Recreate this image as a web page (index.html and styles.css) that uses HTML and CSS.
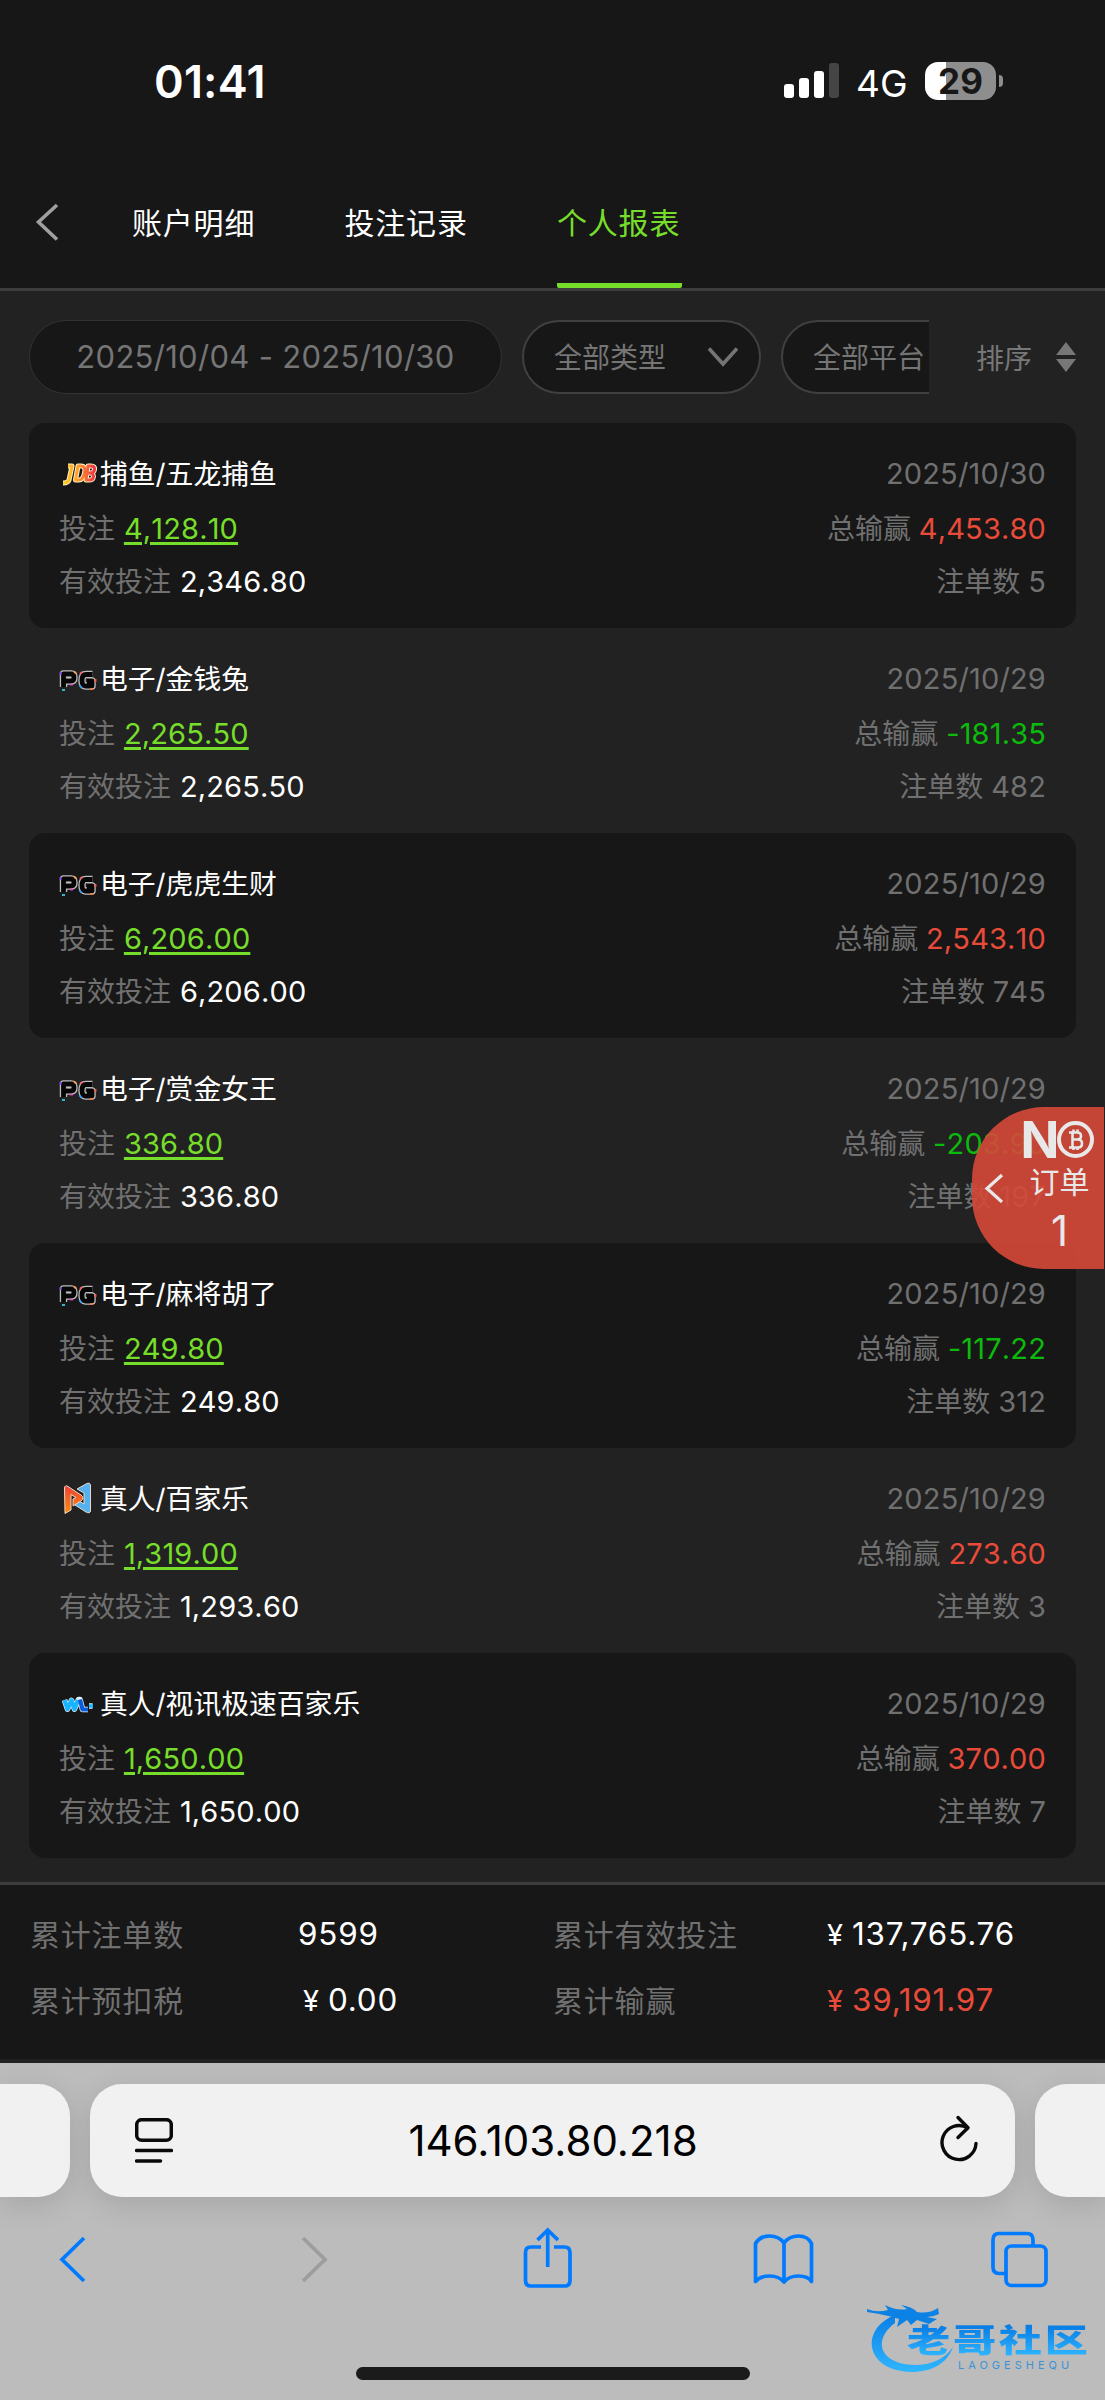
FILE: index.html
```html
<!DOCTYPE html>
<html lang="zh-CN">
<head>
<meta charset="utf-8">
<title>个人报表</title>
<link rel="stylesheet" href="styles.css">
</head>
<body>
<svg width="0" height="0" class="defs" aria-hidden="true">
  <defs>
    <linearGradient id="gold" gradientUnits="userSpaceOnUse" x1="3" x2="36" y1="0" y2="0"><stop offset="0" stop-color="#ffd61f"/><stop offset=".5" stop-color="#ff9a2b"/><stop offset="1" stop-color="#f2304a"/></linearGradient>
    <linearGradient id="fire" x1="0" y1="0" x2="0" y2="1"><stop offset="0" stop-color="#ee4136"/><stop offset="1" stop-color="#ff8a0c"/></linearGradient>
    <linearGradient id="sea" x1="0" y1="0" x2="0" y2="1"><stop offset="0" stop-color="#0a7fe6"/><stop offset="1" stop-color="#2fb6ff"/></linearGradient>
    <symbol id="pg" viewBox="0 0 38 22">
      <g fill="none" stroke-linejoin="round">
        <path d="M4.500 18V5H12Q15 5 15 8.500T12 12H5M33.500 5.500H27Q23 5.500 23 11.500T27 17H33V12H28" stroke="#bdbdbd" stroke-width="7.400"/>
        <path d="M4.500 18V5H12Q15 5 15 8.500T12 12H5M33.500 5.500H27Q23 5.500 23 11.500T27 17H33V12H28" stroke="#060606" stroke-width="4.800"/>
        <path d="M8 8.500H11.500" stroke="#bdbdbd" stroke-width="1.400"/>
      </g>
      <path d="M1.500 3v3" stroke="#8a4dff" stroke-width="1.800"/><path d="M3 21h3" stroke="#35c8e8" stroke-width="1.800"/><path d="M11 15.500h3" stroke="#f14bd0" stroke-width="1.800"/><path d="M15 2.500l2 2" stroke="#ff9a4a" stroke-width="1.800"/><path d="M20.500 16l2 3" stroke="#3a9cff" stroke-width="1.800"/><path d="M36.500 10v3" stroke="#ff5a4a" stroke-width="1.800"/><path d="M31 20h3" stroke="#ff7a3a" stroke-width="1.800"/><path d="M21 5l2-2" stroke="#ff5a6a" stroke-width="1.800"/>
    </symbol>
  </defs>
</svg>

<div class="status">
  <span class="clock">01:41</span>
  <div class="status-right">
    <svg class="signal" width="56" height="36" viewBox="0 0 56 36"><rect x="0" y="21" width="10" height="14" rx="3" fill="#fff"/><rect x="15" y="15" width="10" height="20" rx="3" fill="#fff"/><rect x="30" y="8" width="10" height="27" rx="3" fill="#fff"/><rect x="45" y="0" width="10" height="35" rx="3" fill="#454545"/></svg>
    <span class="net">4G</span>
    <div class="battery"><span>29</span></div>
    <i class="battery-cap"></i>
  </div>
</div>

<nav class="tabs">
  <svg class="back" width="26" height="40" viewBox="0 0 26 40"><path d="M24 3L5.500 20L24 37.500" fill="none" stroke="#a0a0a0" stroke-width="3.600"/></svg>
  <a>账户明细</a><a>投注记录</a><a class="on">个人报表</a>
</nav>

<section class="filters">
  <div class="pills">
    <div class="pill date">2025/10/04 - 2025/10/30</div>
    <div class="pill type"><span>全部类型</span><svg width="32" height="22" viewBox="0 0 32 22"><path d="M2 2.500L16 18L30 2.500" fill="none" stroke="#757575" stroke-width="3.600"/></svg></div>
    <div class="pill plat"><span>全部平台</span></div>
  </div>
  <div class="sort"><span>排序</span><svg width="20" height="30" viewBox="0 0 20 30"><path d="M0 13L10 0L20 13ZM0 17H20L10 30Z" fill="#777"/></svg></div>
</section>

<main class="list">
  <article class="card">
    <h3><svg class="logo" width="38" height="38" viewBox="0 0 38 38"><g fill="none" stroke-linejoin="round"><path d="M9 13H13L10 27Q9 30 4 30M19 13L16.500 27H20Q24 27 25.500 20T22 13ZM29 13L27 27H31Q34 27 34.500 23.500Q34 20 31 20Q35 20 35.500 16.500T32 13Z" stroke="#fff1c4" stroke-width="5"/><path d="M9 13H13L10 27Q9 30 4 30M19 13L16.500 27H20Q24 27 25.500 20T22 13ZM29 13L27 27H31Q34 27 34.500 23.500Q34 20 31 20H28.500H31Q35 20 35.500 16.500T32 13Z" stroke="url(#gold)" stroke-width="3"/></g></svg>捕鱼/五龙捕鱼</h3><time>2025/10/30</time>
    <p>投注 <b class="link">4,128.10</b></p><p class="r">总输赢 <b class="up">4,453.80</b></p>
    <p>有效投注 <b>2,346.80</b></p><p class="r">注单数 <b class="num">5</b></p>
  </article>
  <article class="card">
    <h3><svg class="logo pg" width="38" height="22"><use href="#pg"/></svg>电子/金钱兔</h3><time>2025/10/29</time>
    <p>投注 <b class="link">2,265.50</b></p><p class="r">总输赢 <b class="down">-181.35</b></p>
    <p>有效投注 <b>2,265.50</b></p><p class="r">注单数 <b class="num">482</b></p>
  </article>
  <article class="card">
    <h3><svg class="logo pg" width="38" height="22"><use href="#pg"/></svg>电子/虎虎生财</h3><time>2025/10/29</time>
    <p>投注 <b class="link">6,206.00</b></p><p class="r">总输赢 <b class="up">2,543.10</b></p>
    <p>有效投注 <b>6,206.00</b></p><p class="r">注单数 <b class="num">745</b></p>
  </article>
  <article class="card">
    <h3><svg class="logo pg" width="38" height="22"><use href="#pg"/></svg>电子/赏金女王</h3><time>2025/10/29</time>
    <p>投注 <b class="link">336.80</b></p><p class="r">总输赢 <b class="down">-203.90</b></p>
    <p>有效投注 <b>336.80</b></p><p class="r">注单数 <b class="num">197</b></p>
  </article>
  <article class="card">
    <h3><svg class="logo pg" width="38" height="22"><use href="#pg"/></svg>电子/麻将胡了</h3><time>2025/10/29</time>
    <p>投注 <b class="link">249.80</b></p><p class="r">总输赢 <b class="down">-117.22</b></p>
    <p>有效投注 <b>249.80</b></p><p class="r">注单数 <b class="num">312</b></p>
  </article>
  <article class="card">
    <h3><svg class="logo" width="38" height="38" viewBox="0 0 38 38"><g stroke="#e9d9c8" stroke-width="1" stroke-linejoin="round"><path d="M27 6Q31.500 3.500 31.500 8V33Q31 36 27 34L16 27L20 23L25 26V15L18 11Z" fill="#56b2ee"/><path d="M5.500 10Q6 6.500 9 8.500L22 17Q26 20 22 23L14 28V21L17 19.500L12 16.500V32L6 35.500Z" fill="url(#fire)"/></g></svg>真人/百家乐</h3><time>2025/10/29</time>
    <p>投注 <b class="link">1,319.00</b></p><p class="r">总输赢 <b class="up">273.60</b></p>
    <p>有效投注 <b>1,293.60</b></p><p class="r">注单数 <b class="num">3</b></p>
  </article>
  <article class="card">
    <h3><svg class="logo" width="38" height="38" viewBox="0 0 38 38"><g fill="none" stroke-linejoin="round"><path d="M5.500 17L8.500 26L12.500 17.500L15.500 26L19.500 16.500H21L23.500 26.500H29M30 23H33.500" stroke="#e4f4ff" stroke-width="5.600"/><path d="M5.500 17L8.500 26L12.500 17.500L15.500 26L19 17" stroke="#18b4ff" stroke-width="4.300"/><path d="M21 16.500L23.500 26.500H29" stroke="#0a5bd8" stroke-width="4.200"/><path d="M30 23H34" stroke="#18b4ff" stroke-width="3.500"/></g></svg>真人/视讯极速百家乐</h3><time>2025/10/29</time>
    <p>投注 <b class="link">1,650.00</b></p><p class="r">总输赢 <b class="up">370.00</b></p>
    <p>有效投注 <b>1,650.00</b></p><p class="r">注单数 <b class="num">7</b></p>
  </article>
</main>

<section class="totals">
  <span>累计注单数</span><b>9599</b><span>累计有效投注</span><b><i>¥</i>137,765.76</b>
  <span>累计预扣税</span><b class="pad"><i>¥</i>0.00</b><span>累计输赢</span><b class="up"><i>¥</i>39,191.97</b>
</section>

<footer class="browser">
  <div class="urls">
    <div class="tab side left"></div>
    <div class="tab main">
      <svg width="38" height="46" viewBox="0 0 38 46"><g fill="none" stroke="#0a0a0a" stroke-width="3.500"><rect x="1.700" y="1.700" width="34.600" height="20.600" rx="5"/><path d="M1.500 32.500H36.500M1.500 43H25.500" stroke-linecap="round"/></g></svg>
      <span>146.103.80.218</span>
      <svg class="reload" width="38" height="48" viewBox="0 0 38 48"><g fill="none" stroke="#0a0a0a" stroke-width="3.400" stroke-linecap="round" stroke-linejoin="round"><path d="M36 28.500A17 17 0 1 1 27.500 12.800"/><path d="M18 2.500L28 12.800L18 22.500"/></g></svg>
    </div>
    <div class="tab side right"></div>
  </div>
  <div class="tools">
    <svg width="1105" height="80" viewBox="0 2220 1105 80" fill="none" stroke="#007aff" stroke-width="3.700">
      <path d="M84 2238L62 2259.500L84 2281"/>
      <path d="M303 2238L325 2259.500L303 2281" stroke="#9d9d9d"/>
      <path d="M541 2247H531Q525.500 2247 525.500 2252.500V2280.500Q525.500 2286 531 2286H564.500Q570 2286 570 2280.500V2252.500Q570 2247 564.500 2247H554M547.700 2267V2231M537.500 2240L547.700 2230L558 2240"/>
      <path stroke-linejoin="round" d="M784 2243Q779 2236 769.500 2236T755.500 2243.500V2281.500Q760 2276 769.500 2276T784 2282Q789 2276 798.500 2276T811.500 2281.500V2243.500Q808 2236 798.500 2236T784 2243V2282"/>
      <path d="M1005 2273.500H999Q993 2273.500 993 2267V2240Q993 2233.500 999 2233.500H1027Q1033 2233.500 1033 2240V2245"/><rect x="1006" y="2246" width="40" height="39.500" rx="5.500"/>
    </svg>
  </div>
  <div class="home"></div>
</footer>

<aside class="float">
  <svg width="20" height="30" viewBox="0 0 20 30"><path d="M18 2L3 15.500L18 29" fill="none" stroke="#e8e8e8" stroke-width="3.200"/></svg>
  <div class="float-body">
    <div class="no"><b>N</b><svg width="37" height="37" viewBox="0 0 37 37"><g fill="none" stroke="#e8e8e8"><circle cx="18.500" cy="18.500" r="16.500" stroke-width="4"/><path d="M12 11.500H20Q24 11.500 24 15T20 18.500H15H21Q25 18.500 25 22.500T21 26.500H12M15.500 11.500V26.500M16.500 8.500V11M20.500 8.500V11M16.500 26.500V29M20.500 26.500V29" stroke-width="2.600"/></g></svg></div>
    <span class="t">订单</span><span class="n">1</span>
  </div>
</aside>

<div class="mark">
  <svg width="92" height="72" viewBox="0 0 92 72"><path d="M28 10C-8 24 -2 66 44 67C66 67 80 58 86 42C78 54 64 60 48 60C14 60 4 36 28 18Z" fill="url(#sea)"/><path d="M0 4Q10 8 21 5L18 0Q30 6 40 4L34 0Q46 2 50 7Q62 9 71 3L72 9Q66 12 60 12L70 14L62 19L50 15L44 20L40 15L30 22L32 14Q20 10 0 7Z" fill="#0b82e4"/></svg>
  <div><b>老哥社区</b><small>LAOGESHEQU</small></div>
</div>
</body>
</html>
```
FILE: styles.css
```css
* { box-sizing: border-box; margin: 0; padding: 0; }
body {
  position: relative; width: 1105px; height: 2400px; overflow: hidden;
  display: flex; flex-direction: column;
  background: #222; color: #fff;
  font-family: Inter, "Noto Sans CJK SC", sans-serif; font-size: 28px;
}
b, h3, i { font-weight: 400; font-style: normal; }
svg { display: block; flex: none; }
.defs { position: absolute; }

.status {
  height: 164px; flex: none; background: #171717;
  display: flex; justify-content: space-between; padding: 0 102px 0 154px;
}
.clock { font-size: 45px; font-weight: 600; line-height: 164px; letter-spacing: .2px; }
.status-right { display: flex; align-items: center; height: 162px; }
.net { font-size: 37px; font-weight: 400; margin: 4px 18px 0 16px; width: 51px; }
.battery {
  width: 71px; height: 38px; border-radius: 13px; color: #171717;
  background: linear-gradient(90deg, #fff 21px, #8e8e8e 21px);
  font-size: 35px; font-weight: 700; text-align: center; line-height: 38px;
}
.battery-cap { width: 4px; height: 12px; margin-left: 3px; background: #8e8e8e; border-radius: 0 4px 4px 0; }

.tabs {
  height: 127px; flex: none; background: #171717; border-bottom: 3px solid #3c3c3c;
  display: flex; padding-left: 33px; font-size: 30px; letter-spacing: .8px;
}
.back { margin: 38px 73px 0 0; }
.tabs a { width: 125px; margin-right: 87.5px; height: 124px; line-height: 118px; white-space: nowrap; }
.tabs .on { color: #77dd2b; border-bottom: 5px solid #77dd2b; border-radius: 2px; }

.filters { height: 132px; flex: none; display: flex; padding: 29px 29px 0; }
.pills { width: 900px; height: 74px; display: flex; gap: 20px; overflow: hidden; }
.pill {
  flex: none; height: 74px; border: 2px solid #404040; border-radius: 37px; background: #171717;
  color: #757575; line-height: 72px; display: flex; align-items: center; justify-content: space-between;
  white-space: nowrap;
}
.date { width: 473px; border: 1px solid #333; justify-content: center; font-size: 31px; letter-spacing: .3px; }
.type { width: 239px; padding: 0 20px 0 30px; }
.plat { width: 239px; padding-left: 30px; }
.type span, .plat span { padding-top: 2px; }
.sort { display: flex; height: 74px; align-items: center; color: #777; justify-content: space-between; width: 100px; margin-left: auto; }

.list { height: 1459px; flex: none; padding: 0 29px; }
.card {
  height: 205px; padding: 23px 30px; border-radius: 16px; color: #707070;
  display: grid; grid-template-columns: 1fr auto; grid-template-rows: 54px 54px 52px;
  align-items: center; white-space: nowrap;
}
.card:nth-child(odd) { background: #171717; }
.card h3 { display: flex; align-items: center; gap: 3px; font-size: 27.8px; color: #fff; padding-bottom: 3px; }
.card time { font-size: 29px; padding-top: 1px; letter-spacing: .15px; }
.card b { color: #fff; font-size: 29px; font-kerning: none; letter-spacing: .15px; margin-left: 1px; }
.card .r b { margin-left: 0; }
.card .num { color: inherit; }
.card .link { color: #77dd2b; text-decoration: underline; text-decoration-thickness: 3px; text-underline-offset: 3px; }
.card .up, .totals .up { color: #e94b3a; }
.card .down { color: #0cba0c; }
.card .r, .card time { text-align: right; }
.pg { margin-top: 7px; }

.totals {
  height: 181px; flex: none; background: #171717; border-top: 3px solid #3c3c3c; border-bottom: 4px solid #222;
  padding: 16px 30px 0; display: grid; grid-template-columns: 268px 255px 274px 1fr; grid-template-rows: 66px 66px;
  align-items: center; font-size: 30px; letter-spacing: .8px; color: #707070; white-space: nowrap;
}
.totals span { padding-bottom: 2px; }
.totals b { color: #fff; font-size: 31.4px; }
.totals i { display: inline-block; width: 25px; font-size: 29px; }
.totals .pad { padding-left: 5px; }

.browser { flex: 1; background: #bcbcbc; display: flex; flex-direction: column; padding-top: 21px; }
.urls { display: flex; gap: 20px; }
.tab { height: 113px; background: #f1f1f1; border-radius: 32px; box-shadow: 0 8px 30px rgba(0,0,0,.12); flex: none; }
.left { width: 70px; border-radius: 0 32px 32px 0; }
.right { width: 70px; border-radius: 32px 0 0 32px; }
.tab.main { width: 925px; display: flex; align-items: center; justify-content: space-between; padding: 0 37px 0 45px; color: #000; font-size: 42px; }
.tab.main span { margin-right: 7px; }
.reload { margin-bottom: 4px; }
.tools { margin-top: 23px; }
.home { width: 394px; height: 13px; border-radius: 7px; background: #1b1b1b; margin: 67px auto 0; }

.float {
  position: absolute; left: 972px; top: 1107px; width: 132px; height: 162px;
  background: rgba(214,72,57,.9); border-radius: 72px 0 0 72px; color: #e8e8e8;
  display: flex; align-items: center; padding-left: 12px;
}
.float-body { width: 90px; display: flex; flex-direction: column; align-items: center; margin-left: 11px; }
.no { display: flex; align-items: center; height: 40px; margin-right: 4px; }
.no b { font-size: 51px; font-weight: 700; line-height: 40px; letter-spacing: -2px; }
.t { font-size: 30px; line-height: 44px; }
.n { font-size: 42px; line-height: 53px; }

.mark { position: absolute; left: 867px; top: 2305px; width: 225px; height: 72px; }
.mark div { position: absolute; left: 40px; top: 17px; width: 182px; }
.mark b {
  display: block; width: 135px; font-size: 32px; line-height: 38px; font-weight: 900; letter-spacing: 2px; white-space: nowrap;
  background: linear-gradient(#0a7fe6 15%, #2fb6ff 90%); background-clip: text; color: transparent;
  transform: scaleX(1.35); transform-origin: 0 0;
}
.mark small { display: block; margin-left: 51px; font-size: 11px; line-height: 11px; letter-spacing: 4px; color: #3b93d6; }
```
